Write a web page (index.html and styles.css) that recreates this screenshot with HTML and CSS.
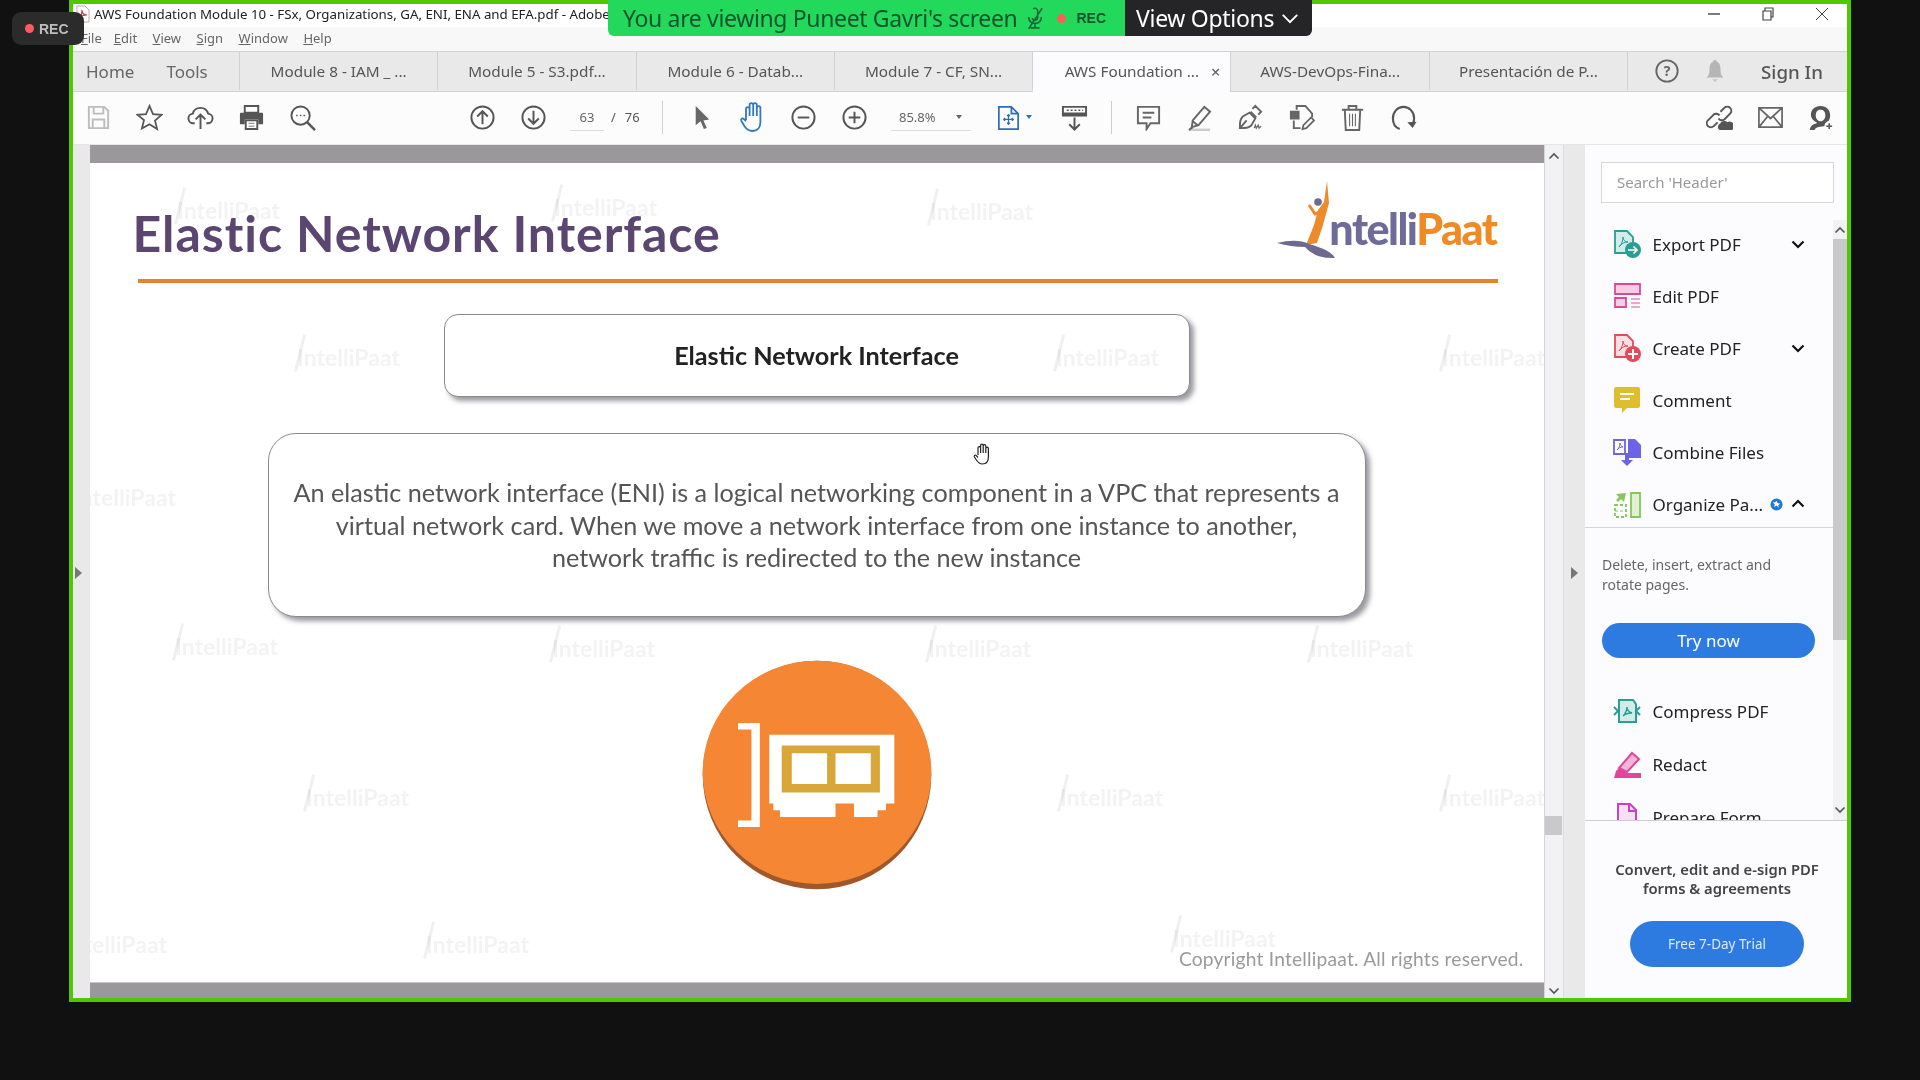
FILE: index.html
```html
<!DOCTYPE html>
<html lang="en">
<head>
<meta charset="utf-8">
<title>AWS Foundation Module 10</title>
<link rel="stylesheet" href="styles.css">
</head>
<body>
<div class="screen">
  <div class="window">
    <div class="titlebar">
      <svg class="app-icon" viewBox="0 0 14 18"><path d="M1 1h8l4 4v12H1z" fill="#fff" stroke="#c9a5a8"/><path d="M3 13c2-2 3-6 3-8 0 3 2 5 5 5-3 0-6 1-8 3z" fill="none" stroke="#d2343c" stroke-width="1.2"/></svg>
      <span class="title-text">AWS Foundation Module 10 - FSx, Organizations, GA, ENI, ENA and EFA.pdf - Adobe Acrobat Reader DC</span>
      <div class="winbtns">
        <svg class="winbtn" viewBox="0 0 16 16"><path d="M2 8h12" stroke="#222" stroke-width="1.2"/></svg>
        <svg class="winbtn" viewBox="0 0 16 16"><path d="M3 5h8v9H3zM5 5V2h8v9h-2" fill="none" stroke="#444" stroke-width="1.2"/></svg>
        <svg class="winbtn" viewBox="0 0 16 16"><path d="M2 2l12 12M14 2L2 14" stroke="#444" stroke-width="1"/></svg>
      </div>
    </div>
    <div class="menubar">
      <span class="menu-file"><u>F</u>ile</span><span><u>E</u>dit</span><span><u>V</u>iew</span><span><u>S</u>ign</span><span><u>W</u>indow</span><span><u>H</u>elp</span>
    </div>
    <div class="tabbar">
      <div class="nav-tabs"><span>Home</span><span>Tools</span></div>
      <div class="tab">Module 8 - IAM _ ...</div>
      <div class="tab">Module 5 - S3.pdf...</div>
      <div class="tab">Module 6 - Datab...</div>
      <div class="tab">Module 7 - CF, SN...</div>
      <div class="tab tab-active"><span>AWS Foundation ...</span><b class="tab-x">×</b></div>
      <div class="tab">AWS-DevOps-Fina...</div>
      <div class="tab">Presentación de P...</div>
      <div class="tab-right">
        <svg class="help" viewBox="0 0 28 28"><circle cx="14" cy="14" r="11.5" fill="none" stroke="#666" stroke-width="2"/><text x="14" y="19.5" text-anchor="middle" class="help-q">?</text></svg>
        <svg class="bell" viewBox="0 0 24 28"><path d="M12 2c1.500 0 2 1 2 2 3 1 4 4 4 8 0 5 1 7 3 9H3c2-2 3-4 3-9 0-4 1-7 4-8 0-1 .5-2 2-2z" fill="#b5b5b5"/><path d="M9 23h6l-3 3z" fill="#c5c5c5"/></svg>
        <span class="signin">Sign In</span>
      </div>
    </div>
    <div class="toolbar">
      <div class="cell"><svg class="ti" viewBox="0 0 28 28" fill="none" stroke="#bdbdbd" stroke-width="2"><path d="M4 3h16l4 4v18H4zM9 3v7h10V3M8 25v-9h12v9"/></svg></div>
      <div class="cell"><svg class="ti" viewBox="0 0 28 28" fill="none" stroke="#555" stroke-width="1.800"><path d="M14 2l3.600 8.500 9 .7-6.900 5.900 2.200 8.900L14 21l-7.900 4.500 2.200-8.900L1.400 11.200l9-.7z"/></svg></div>
      <div class="cell"><svg class="ti" viewBox="0 0 28 28" fill="none" stroke="#555" stroke-width="2"><path d="M8 20H7a5 5 0 0 1-1-10c1-4 4-6 8-6s7 3 8 6a5 5 0 0 1-1 10h-1M14 26V12M9 16l5-5 5 5"/></svg></div>
      <div class="cell"><svg class="ti" viewBox="0 0 28 28"><path d="M7 2h14v7H7z" fill="none" stroke="#555" stroke-width="2"/><path d="M3 9h22a1 1 0 0 1 1 1v11h-5v-5H7v5H2V10a1 1 0 0 1 1-1z" fill="#555"/><path d="M8 17h12v9H8z" fill="none" stroke="#555" stroke-width="2"/><path d="M11 20h6M11 23h6" stroke="#777"/></svg></div>
      <div class="cell"><svg class="ti" viewBox="0 0 28 28" fill="none" stroke="#555" stroke-width="2"><circle cx="12" cy="12" r="9.500"/><path d="M19 19l8 8" stroke-width="2.500"/><path d="M7.500 12h1.500M11.300 12h1.500M15 12h1.500" stroke-width="1.600"/></svg></div>

      <div class="cell gap-nav"><svg class="ti" viewBox="0 0 28 28" fill="none" stroke="#555" stroke-width="2"><circle cx="14" cy="14" r="11.500"/><path d="M14 21V8M8.500 13L14 7.500l5.500 5.500"/></svg></div>
      <div class="cell"><svg class="ti" viewBox="0 0 28 28" fill="none" stroke="#555" stroke-width="2"><circle cx="14" cy="14" r="11.500"/><path d="M14 7v13M8.500 15l5.500 5.500 5.500-5.500"/></svg></div>
      <div class="pagefield"><span class="pagenum">63</span><span class="pageslash">/</span><span class="pagetotal">76</span></div>
      <i class="tsep"></i>
      <div class="cell"><svg class="ti" viewBox="0 0 28 28"><path d="M8 2l14 14-6 1 3.500 8-3 1-3.500-8-5 4z" fill="#666"/></svg></div>
      <div class="cell"><svg class="ti ti-lg" viewBox="0 0 28 32" fill="none" stroke="#2d7ac0" stroke-width="1.800"><path d="M7 19V8a1.800 1.800 0 0 1 3.600 0v7M10.600 15V4a1.800 1.800 0 0 1 3.600 0v11M14.200 15V4a1.800 1.800 0 0 1 3.600 0v11M17.800 15V7a1.800 1.800 0 0 1 3.600 0v14c0 6-3 9-8 9-4 0-6-2-8-5l-3-5c-1-2 1-3.500 2.500-2L7 20"/></svg></div>
      <div class="cell"><svg class="ti" viewBox="0 0 28 28" fill="none" stroke="#555" stroke-width="2"><circle cx="14" cy="14" r="11.500"/><path d="M8 14h12"/></svg></div>
      <div class="cell"><svg class="ti" viewBox="0 0 28 28" fill="none" stroke="#555" stroke-width="2"><circle cx="14" cy="14" r="11.500"/><path d="M8 14h12M14 8v12"/></svg></div>
      <div class="zoomfield"><span>85.8%</span><i class="caret"></i></div>
      <div class="fit"><svg class="ti" viewBox="0 0 28 28" fill="none" stroke="#2d6fb5" stroke-width="1.800"><path d="M4 3h13l7 7v16H4zM17 3v7h7"/><path d="M14 11v10M9 16h10M12.500 12.500L14 11l1.500 1.500M12.500 19.500L14 21l1.500-1.500M10.500 14.500L9 16l1.500 1.500M17.500 14.500L19 16l-1.500 1.500" stroke-width="1.300"/></svg><i class="caret caret-blue"></i></div>
      <div class="cell cell-scan"><svg class="ti" viewBox="0 0 28 28" fill="none" stroke="#555" stroke-width="2"><path d="M2 3h24v7H2z"/><path d="M2 10h24v2H2z" fill="#777"/><path d="M6 6.500h2M10 6.500h2M14 6.500h2M18 6.500h2M22 6.500h1" stroke-width="1.400"/><path d="M14 14v12M8.500 21l5.500 5.500 5.500-5.500"/></svg></div>
      <i class="tsep tsep-2"></i>
      <div class="cell"><svg class="ti" viewBox="0 0 28 28" fill="none" stroke="#666" stroke-width="2"><path d="M3 3h22v17h-9l-4 6v-6H3z"/><path d="M8 9h12M8 14h9"/></svg></div>
      <div class="cell"><svg class="ti" viewBox="0 0 28 28"><path d="M7 17L19 3l6 5-12 14-7 2z" fill="none" stroke="#666" stroke-width="2"/><path d="M7 18l5 4" stroke="#666" stroke-width="2"/><path d="M3 27h22" stroke="#ccc" stroke-width="3"/><path d="M3 27l4-3" stroke="#666" stroke-width="2"/></svg></div>
      <div class="cell"><svg class="ti" viewBox="0 0 28 28" fill="none" stroke="#666" stroke-width="2"><path d="M3 25c0-6 0-9 3-12l7-4 6 6-4 7c-3 3-6 3-12 3zM3 25l7-8M16 5l3-3 6 6-3 3M14 8l6 6"/><path d="M18 25l1-3 1 3 2-3 1 3 2-2" stroke-width="1.300"/></svg></div>
      <div class="cell"><svg class="ti" viewBox="0 0 28 28" fill="none" stroke="#666" stroke-width="2"><path d="M9 6V2h9l7 8v4M6 17v8h7"/><path d="M3 8h8v7H3z" fill="#666"/><path d="M15 26l1-4 8-8 3 3-8 8z" stroke-width="1.800"/></svg></div>
      <div class="cell"><svg class="ti" viewBox="0 0 28 28" fill="none" stroke="#666" stroke-width="2"><path d="M3 6h22M10 6V2h8v4M6 6l1 21h14l1-21"/><path d="M11 10v13M14 10v13M17 10v13" stroke-width="1.100"/></svg></div>
      <div class="cell"><svg class="ti" viewBox="0 0 28 28" fill="none" stroke="#555" stroke-width="2.200"><path d="M10 26C5 24 3 20 3 15 3 8 8 3 14 3s11 5 11 12c0 2-.5 4-1.500 6"/><path d="M18 19l5.500 6 4-6.500z" fill="#555" stroke="none"/></svg></div>
      <div class="toolbar-right">
        <div class="cell"><svg class="ti" viewBox="0 0 28 28" fill="none" stroke="#555" stroke-width="2"><path d="M12 19l-4 4a4 4 0 0 1-6-6l6-6a4 4 0 0 1 6 1M15 8l4-4a4 4 0 0 1 6 6l-6 6a4 4 0 0 1-6-1"/><path d="M14 27a4 4 0 0 1 1-7c1-3 6-3 7-1a4 4 0 0 1 5 8z" fill="#555" stroke="none"/></svg></div>
        <div class="cell"><svg class="ti" viewBox="0 0 28 28" fill="none" stroke="#666" stroke-width="2"><path d="M2 4h24v20H2zM2 4l12 11L26 4M2 24l9-11M26 24l-9-11" stroke-width="1.800"/></svg></div>
        <div class="cell"><svg class="ti" viewBox="0 0 28 28"><path d="M13 2c6 0 10 4 10 10 0 4-2 7-5 8v3c-4 0-11 1-11 4H2c0-4 3-6 7-7v-1c-3-1-6-4-6-8C3 6 7 2 13 2z" fill="#555"/><path d="M13 6c-3 0-5 2-5 6s3 6 5 6 5-2 5-6-2-6-5-6z" fill="#fcfcfd"/><circle cx="22" cy="23" r="5" fill="#fcfcfd"/><path d="M19 23h6M22 20v6" stroke="#555" stroke-width="1.600"/></svg></div>
      </div>
    </div>
    <div class="main">
      <div class="lstrip"><i class="tri"></i></div>
      <div class="doc">
        <div class="doc-bar doc-bar-top"></div>
        <div class="slide">
          <div class="slide-head">
            <h1 class="slide-title">Elastic Network Interface</h1>
            <div class="logo">
              <svg class="logo-fig" viewBox="0 0 60 80">
                <path d="M50 0l2 22-6 22-6 18-11 2 8-20 4-15 6-8z" fill="#ee8a2a"/>
                <circle cx="41" cy="21" r="3.800" fill="#6d6a90"/>
                <path d="M32 24l6 9 5-2" fill="none" stroke="#ee8a2a" stroke-width="3"/>
                <path d="M0 62q20-5 32 1 22 6 26 14-20 1-30-11-14 0-28-4z" fill="#6d6a90"/>
              </svg>
              <span class="logo-text">ntelli<em>Paat</em></span>
            </div>
          </div>
          <div class="slide-rule"></div>
          <div class="box box-small">Elastic Network Interface</div>
          <div class="box box-large">An elastic network interface (ENI) is a logical networking component in a VPC that represents a<br>virtual network card. When we move a network interface from one instance to another,<br>network traffic is redirected to the new instance</div>
          <svg class="eni" viewBox="65 60 690 690">
            <circle cx="410" cy="405" r="340" fill="#a1572c"/>
            <ellipse cx="410" cy="397" rx="340" ry="332" fill="#f58634"/>
            <path d="M175 250h65v310h-65v-20h40V270h-40z" fill="#fff"/>
            <path d="M268 285h372v205h-25v20h-25v20h-70v-40h-55v40H300v-20h-20v-20h-12z" fill="#fff"/>
            <path d="M305 317h292v140H305z" fill="#d9a63a"/>
            <path d="M335 340h105v92H335zM465 340h105v92H465z" fill="#fff"/>
          </svg>
          <div class="copyright">Copyright Intellipaat. All rights reserved.</div>
          <div class="wms">
            <span class="wm">IntelliPaat</span><span class="wm">IntelliPaat</span><span class="wm">IntelliPaat</span>
            <span class="wm">IntelliPaat</span><span class="wm">IntelliPaat</span><span class="wm">IntelliPaat</span>
            <span class="wm">IntelliPaat</span><span class="wm">IntelliPaat</span><span class="wm">IntelliPaat</span>
            <span class="wm">IntelliPaat</span><span class="wm">IntelliPaat</span><span class="wm">IntelliPaat</span>
            <span class="wm">IntelliPaat</span><span class="wm">IntelliPaat</span><span class="wm">IntelliPaat</span>
            <span class="wm">IntelliPaat</span><span class="wm">IntelliPaat</span>
          </div>
        </div>
        <div class="doc-bar doc-bar-bottom"></div>
      </div>
      <div class="vscroll">
        <svg class="sb-arrow" viewBox="0 0 12 8"><path d="M1.500 6.500L6 2l4.500 4.500" fill="none" stroke="#555" stroke-width="1.600"/></svg>
        <i class="vthumb"></i>
        <svg class="sb-arrow" viewBox="0 0 12 8"><path d="M1.500 1.500L6 6l4.500-4.500" fill="none" stroke="#555" stroke-width="1.600"/></svg>
      </div>
      <div class="splitter"><i class="tri"></i></div>
      <aside class="sidebar">
        <div class="search-wrap"><div class="search">Search 'Header'</div></div>
        <div class="tools">
          <div class="tool-list">
            <div class="tool"><svg class="si" viewBox="0 0 28 28"><path d="M2 1h12l6 6v16H2z" fill="#d3ebe9" stroke="#2a9d94" stroke-width="1.800"/><path d="M6 17c3-3 4-7 4-10 0 3 2 5 5 5-4 0-7 2-9 5z" fill="none" stroke="#2a9d94"/><circle cx="20" cy="20" r="8" fill="#2a9d94"/><path d="M15 20h9M20.500 16.500l3.500 3.500-3.500 3.500" stroke="#fff" stroke-width="1.700" fill="none"/></svg><span class="tname">Export PDF</span><svg class="chev" viewBox="0 0 14 9"><path d="M1.500 1.500L7 7l5.500-5.500" fill="none" stroke="#111" stroke-width="2.200"/></svg></div>
            <div class="tool"><svg class="si" viewBox="0 0 28 28"><path d="M2 2h25v10H2z" fill="#f5cfe3" stroke="#d9489a" stroke-width="1.800"/><path d="M2 16h11v9H2z" fill="#f5cfe3" stroke="#d9489a" stroke-width="1.800"/><path d="M18 17h9M18 21h9M18 25h9" stroke="#e58bbc" stroke-width="1.300"/></svg><span class="tname">Edit PDF</span></div>
            <div class="tool"><svg class="si" viewBox="0 0 28 28"><path d="M2 1h12l6 6v16H2z" fill="#fbe1e3" stroke="#e34a5a" stroke-width="1.800"/><path d="M6 17c3-3 4-7 4-10 0 3 2 5 5 5-4 0-7 2-9 5z" fill="none" stroke="#e34a5a"/><circle cx="20" cy="20" r="8" fill="#e34a5a"/><path d="M15 20h10M20 15v10" stroke="#fff" stroke-width="2"/></svg><span class="tname">Create PDF</span><svg class="chev" viewBox="0 0 14 9"><path d="M1.500 1.500L7 7l5.500-5.500" fill="none" stroke="#111" stroke-width="2.200"/></svg></div>
            <div class="tool"><svg class="si" viewBox="0 0 28 28"><path d="M3 1h22a2 2 0 0 1 2 2v17a2 2 0 0 1-2 2H14l-5 5v-5H3a2 2 0 0 1-2-2V3a2 2 0 0 1 2-2z" fill="#e0bd2c"/><path d="M7 8h14M7 13h10" stroke="#fff" stroke-width="2"/></svg><span class="tname">Comment</span></div>
            <div class="tool"><svg class="si" viewBox="0 0 28 28"><path d="M1 2h11v14H1z" fill="#fff" stroke="#6c64e6" stroke-width="1.800"/><path d="M4 12c2-2 3-4 3-7 0 2 1 3 3 4-3 0-4 1-6 3z" fill="none" stroke="#6c64e6"/><path d="M15 1h7l6 6v13H15z" fill="#6c64e6"/><path d="M12 15h4v7h4l-6 6-6-6h4z" fill="#6c64e6"/></svg><span class="tname">Combine Files</span></div>
            <div class="tool tool-organize"><svg class="si" viewBox="0 0 28 28"><path d="M18 2h9v24h-9z" fill="#dff0d3" stroke="#86c75a" stroke-width="1.800"/><path d="M2 14h11v12H2z" fill="none" stroke="#86c75a" stroke-width="1.800" stroke-dasharray="3 2"/><path d="M2 20h11" stroke="#86c75a" stroke-dasharray="3 2"/><path d="M13 2L3 3l3 3-3 3 2 2 3-3 3 3z" fill="#86c75a"/></svg><span class="tname tname-short">Organize Pa...</span><svg class="star-badge" viewBox="0 0 14 14"><circle cx="7" cy="7" r="6.500" fill="#1f78e0"/><path d="M7 3l1.200 2.700 2.800.2-2.100 1.900.7 2.800L7 8.100 4.400 9.600l.7-2.800L3 4.900l2.800-.2z" fill="#fff"/></svg><svg class="chev" viewBox="0 0 14 9"><path d="M1.500 7.500L7 2l5.500 5.500" fill="none" stroke="#111" stroke-width="2.200"/></svg></div>
            <div class="tool-detail">
              <p class="tool-desc">Delete, insert, extract and<br>rotate pages.</p>
              <div class="btn btn-try">Try now</div>
            </div>
            <div class="tool tool-tall"><svg class="si" viewBox="0 0 28 28"><path d="M6 2h14l3 4v18H6z" fill="#d3ebe9" stroke="#2a9d94" stroke-width="2"/><path d="M10 18c2-2 4-5 4-9 0 3 2 5 5 6-4 0-7 1-9 3z" fill="none" stroke="#2a9d94" stroke-width="1.400"/><path d="M1 9l4 4-4 4M27 9l-4 4 4 4" fill="none" stroke="#2a9d94" stroke-width="2"/></svg><span class="tname">Compress PDF</span></div>
            <div class="tool tool-tall"><svg class="si" viewBox="0 0 28 28"><path d="M6 17L19 2l7 6-12 13z" fill="#f4b6d8" stroke="#e0479c" stroke-width="2"/><path d="M1 27l2-7 4-4 7 6-2 5zM12 22h16v5H10z" fill="#e0479c"/></svg><span class="tname">Redact</span></div>
            <div class="tool"><svg class="si" viewBox="0 0 28 28"><path d="M5 1h12l6 6v20H5z" fill="#f7dff5" stroke="#c943c5" stroke-width="2"/><path d="M16 1v7h7M5 21h18" fill="none" stroke="#c943c5" stroke-width="2"/></svg><span class="tname">Prepare Form</span></div>
          </div>
          <div class="side-scroll">
            <svg class="sb-arrow" viewBox="0 0 12 8"><path d="M1.500 6.500L6 2l4.500 4.500" fill="none" stroke="#555" stroke-width="1.600"/></svg>
            <i class="side-thumb"></i>
            <svg class="sb-arrow" viewBox="0 0 12 8"><path d="M1.500 1.500L6 6l4.500-4.500" fill="none" stroke="#555" stroke-width="1.600"/></svg>
          </div>
        </div>
        <div class="promo">
          <p class="promo-text">Convert, edit and e-sign PDF<br>forms &amp; agreements</p>
          <div class="btn btn-trial">Free 7-Day Trial</div>
        </div>
      </aside>
    </div>
  </div>

  <div class="rec-badge"><i class="rec-dot"></i>REC</div>
  <div class="banner">
    <div class="banner-green">
      <span>You are viewing Puneet Gavri's screen</span>
      <svg class="mic" viewBox="0 0 20 26" fill="none" stroke="#176a36" stroke-width="1.800"><path d="M8 3a3 3 0 0 1 5 2v7a3 3 0 0 1-6 1M3 12c0 5 3 7 7 7s7-2 7-7M10 19v5M5 24h10M18 2L3 25"/></svg>
      <i class="banner-dot"></i>
      <b class="banner-rec">REC</b>
    </div>
    <div class="banner-dark"><span>View Options</span><svg class="banner-chev" viewBox="0 0 20 12"><path d="M2 2l8 8 8-8" fill="none" stroke="#fff" stroke-width="2.200"/></svg></div>
  </div>
  <svg class="grab" viewBox="0 0 22 24"><path d="M6 13V6a1.300 1.300 0 0 1 2.600 0v5M8.600 11V3.500a1.300 1.300 0 0 1 2.600 0V11M11.200 11V4a1.300 1.300 0 0 1 2.600 0v7M13.800 11V6.500a1.300 1.300 0 0 1 2.600 0V15c0 4-2 7-6 7-3 0-4-1-6-4l-2-3c-.8-1.400.8-2.400 2-1.400L6 15.500" fill="#fff" stroke="#222" stroke-width="1.200"/></svg>
</div>
</body>
</html>
```
FILE: styles.css
```css
* { box-sizing: border-box; }
html, body { margin: 0; padding: 0; height: 100%; background: #111; overflow: hidden; }
body { font-family: "Noto Sans", "Open Sans", sans-serif; }
.screen { position: relative; width: 1920px; height: 1080px; background: #111; filter: blur(0.35px); }

.window {
  margin-left: 69px; width: 1782px; height: 1002px;
  border: 4px solid #4fc800; background: #fcfcfe;
  display: flex; flex-direction: column; overflow: hidden;
}

.titlebar { height: 23px; padding-bottom: 3px; background: #fff; display: flex; align-items: center; position: relative; flex: none; }
.app-icon { width: 14px; height: 18px; margin-left: 3px; flex: none; }
.title-text { margin-left: 4px; font-size: 13.300px; color: #222; white-space: nowrap; width: 600px; overflow: hidden; }
.winbtns { margin-left: auto; display: flex; margin-right: 17px; }
.winbtn { width: 16px; height: 16px; margin-left: 38px; }
.winbtns .winbtn:first-child { margin-left: 0; }

.menubar { height: 24px; padding-bottom: 2px; background: #f8f8f8; display: flex; align-items: center; font-size: 13px; color: #666; flex: none; }
.menubar span { margin-right: 15.500px; white-space: nowrap; }
.menubar .menu-file { margin-left: 8px; margin-right: 12px; }

.tabbar { height: 41px; padding-bottom: 1px; background: #e9e9e9; border-top: 1px solid #d2d2d2; border-bottom: 1px solid #d2d2d2; display: flex; align-items: stretch; flex: none; font-size: 15.300px; color: #555; }
.nav-tabs { width: 167px; display: flex; align-items: center; padding-left: 13px; gap: 32px; font-size: 17px; color: #666; border-right: 1px solid #d2d2d2; }
.tab { width: 198.300px; display: flex; align-items: center; justify-content: center; border-right: 1px solid #d2d2d2; position: relative; white-space: nowrap; }
.tab-active { background: #fcfcfe; margin-bottom: -2px; padding-bottom: 3px; }
.tab-x { position: absolute; right: 10px; top: 8px; font-size: 17px; font-weight: 500; color: #666; }
.tab-right { flex: 1; display: flex; align-items: center; padding-left: 26px; }
.help { width: 26px; height: 26px; }
.help-q { font: 700 15px "Noto Sans", sans-serif; fill: #666; }
.bell { width: 22px; height: 26px; margin-left: 24px; }
.signin { margin-left: 35px; font-size: 18.700px; font-weight: 500; color: #555; }

.toolbar { height: 53px; padding-bottom: 2px; background: #fcfcfd; display: flex; align-items: center; flex: none; border-bottom: 1px solid #e6e6e6; font-size: 13px; color: #555; }
.cell { width: 51px; display: flex; justify-content: center; flex: none; }
.ti { width: 27px; height: 27px; display: block; }
.ti-lg { width: 28px; height: 32px; }
.gap-nav { margin-left: 129px; }
.pagefield { margin-left: 11px; display: flex; align-items: center; width: 88px; flex: none; }
.pagenum { width: 34px; height: 27px; line-height: 26px; text-align: center; border-bottom: 1px solid #ddd; color: #666; }
.pageslash { margin-left: 7px; }
.pagetotal { margin-left: 9px; }
.tsep { width: 1px; height: 33px; background: #cfcfcf; flex: none; margin-left: 4px; margin-right: 13px; }
.zoomfield { margin-left: 11px; width: 80px; height: 27px; border-bottom: 1px solid #ddd; display: flex; align-items: center; padding-left: 8px; flex: none; color: #666; }
.caret { width: 0; height: 0; border-left: 3.500px solid transparent; border-right: 3.500px solid transparent; border-top: 4.500px solid #666; margin-left: 20px; }
.caret-blue { border-top-color: #2d6fb5; margin-left: 4px; }
.fit { margin-left: 24px; display: flex; align-items: center; flex: none; width: 54px; }
.tsep-2 { margin-left: 11px; margin-right: 11px; }
.toolbar-right { margin-left: auto; display: flex; }

.main { flex: 1; display: flex; min-height: 0; }
.lstrip { width: 16.500px; background: #e9e9e9; display: flex; align-items: center; padding-left: 2px; padding-top: 2px; flex: none; }
.tri { width: 0; height: 0; border-top: 6px solid transparent; border-bottom: 6px solid transparent; border-left: 7px solid #777; display: block; }
.doc { width: 1454px; display: flex; flex-direction: column; flex: none; }
.doc-bar { background: #9a989b; flex: none; }
.doc-bar-top { height: 18px; }
.doc-bar-bottom { flex: 1; border-top: 1px solid #c8c8c8; }

.slide { height: 819px; background: #fff; position: relative; overflow: hidden; flex: none; font-family: Lato, "Liberation Sans", sans-serif; display: flex; flex-direction: column; }
.slide-head { height: 116px; padding-left: 43px; padding-right: 47px; display: flex; justify-content: space-between; align-items: flex-start; flex: none; }
.slide-title { margin: 38px 0 0; font-size: 50px; line-height: 64px; font-weight: 700; letter-spacing: .95px; color: #5b4672; white-space: nowrap; }
.logo { display: flex; align-items: flex-end; margin-top: 18px; }
.logo-fig { width: 60px; height: 80px; margin-right: -8px; }
.logo-text { font-size: 43px; font-weight: 900; color: #6f6b98; letter-spacing: -1.500px; line-height: 64px; white-space: nowrap; }
.logo-text em { font-style: normal; color: #f08a24; }
.slide-rule { height: 4px; background: #e0852c; margin: 0 46px 0 48.500px; flex: none; }
.box { background: #fff; border: 1.500px solid #8a8a8e; box-shadow: 4px 4px 5px rgba(70,70,80,.55); align-self: center; display: flex; align-items: center; justify-content: center; text-align: center; flex: none; }
.box-small { width: 746px; height: 83px; margin-top: 31px; padding-bottom: 2px; border-radius: 14px; font-size: 25.200px; font-weight: 700; color: #222; }
.box-large { width: 1098px; height: 184px; margin-top: 36px; border-radius: 28px; font-size: 25.200px; line-height: 32.500px; color: #555; }
.eni { width: 232px; height: 232px; align-self: center; flex: none; margin-top: 42px; }
.copyright { align-self: flex-end; margin: 56px 20px 0 0; font-size: 19.200px; color: #9a9a9a; letter-spacing: .2px; white-space: nowrap; flex: none; }

.wms { position: absolute; inset: 0; pointer-events: none; }
.wm { position: absolute; transform: translate(-50%, -50%); font-size: 23px; font-weight: 700; color: rgba(90,90,110,.075); white-space: nowrap; filter: blur(.7px); }
.wm::before { content: ""; position: absolute; left: 1px; top: -9px; width: 3px; height: 38px; background: rgba(90,90,110,.09); transform: rotate(14deg); }
.wm:nth-child(1) { left: 139px; top: 47px; }
.wm:nth-child(2) { left: 516px; top: 44px; }
.wm:nth-child(3) { left: 892px; top: 48px; }
.wm:nth-child(4) { left: 259px; top: 194px; }
.wm:nth-child(5) { left: 1018px; top: 194px; }
.wm:nth-child(6) { left: 1404px; top: 194px; }
.wm:nth-child(7) { left: 35px; top: 334px; }
.wm:nth-child(8) { left: 137px; top: 483px; }
.wm:nth-child(9) { left: 514px; top: 485px; }
.wm:nth-child(10) { left: 890px; top: 485px; }
.wm:nth-child(11) { left: 1272px; top: 485px; }
.wm:nth-child(12) { left: 268px; top: 634px; }
.wm:nth-child(13) { left: 1022px; top: 634px; }
.wm:nth-child(14) { left: 1404px; top: 634px; }
.wm:nth-child(15) { left: 26px; top: 781px; }
.wm:nth-child(16) { left: 388px; top: 781px; }
.wm:nth-child(17) { left: 1135px; top: 775px; }

.vscroll { width: 19.500px; background: #f2f1f4; border-left: 1px solid #d5d5d5; flex: none; display: flex; flex-direction: column; align-items: center; padding-top: 7px; }
.sb-arrow { width: 12px; height: 8px; flex: none; }
.vthumb { width: 17px; height: 19px; background: #c9c8ca; margin-top: 656px; margin-bottom: auto; }
.vscroll .sb-arrow:last-child { margin-bottom: 3px; }
.splitter { width: 22px; background: #e9e9e9; flex: none; border-left: 1px solid #dcdcdc; display: flex; align-items: center; justify-content: center; padding-top: 2px; }

.sidebar { width: 262px; background: #fcfcfe; display: flex; flex-direction: column; flex: none; }
.search-wrap { height: 73px; padding: 17px 13px 0 16px; flex: none; }
.search { height: 41px; background: #fff; border: 1.500px solid #d8d8dc; font-size: 15px; line-height: 39px; padding-left: 15px; color: #999; }
.tools { height: 602px; display: flex; overflow: hidden; flex: none; }
.tool-list { width: 248px; flex: none; overflow: hidden; }
.tool { height: 52px; display: flex; align-items: center; padding-left: 28px; color: #222; font-size: 17px; white-space: nowrap; position: relative; }
.tool-tall { height: 53px; }
.si { width: 28px; height: 28px; flex: none; margin-right: 11.500px; }
.chev { width: 14px; height: 9px; position: absolute; left: 206px; top: 22px; }
.tool-organize { height: 50px; padding-top: 4px; border-bottom: 1px solid #d5d5d8; }
.tool-organize .chev { top: 21px; }
.star-badge { width: 13px; height: 13px; position: absolute; left: 185px; top: 20px; }
.tool-detail { height: 157px; padding: 27px 0 0 17px; }
.tool-desc { margin: 0; font-size: 14px; line-height: 19.500px; color: #666; }
.btn { background: #2d7be0; color: #fff; border-radius: 23px; display: flex; align-items: center; justify-content: center; }
.btn-try { width: 213px; height: 35px; margin-top: 29px; font-size: 17px; }
.side-scroll { width: 14px; background: #f2f1f4; flex: none; display: flex; flex-direction: column; align-items: center; margin-top: 2px; padding-top: 6px; }
.side-thumb { width: 14px; height: 401px; background: #c9c8ca; margin-top: 5px; margin-bottom: auto; }
.side-scroll .sb-arrow:last-child { margin-bottom: 6px; }
.promo { flex: 1; border-top: 1px solid #cfcfd2; display: flex; flex-direction: column; align-items: center; padding: 39px 0 0 2px; }
.promo-text { margin: 0; font-size: 14.800px; line-height: 19px; font-weight: 600; color: #444; text-align: center; }
.btn-trial { width: 174px; height: 46px; margin-top: 23px; font-size: 13.500px; color: #dbeaff; }

.rec-badge { position: absolute; left: 12px; top: 12px; width: 72px; height: 33px; background: #2b2b2b; border-radius: 9px; display: flex; align-items: center; padding-left: 13px; font: 700 14px "Liberation Sans", sans-serif; color: #bdbdbd; }
.rec-dot { width: 9px; height: 9px; border-radius: 50%; background: #ff5a5f; margin-right: 5px; }
.banner { position: absolute; left: 608px; top: 0; width: 704px; height: 36px; display: flex; border-radius: 0 0 6px 6px; overflow: hidden; }
.banner-green { width: 517px; background: #22d95c; display: flex; align-items: center; padding-left: 15px; font-size: 23px; letter-spacing: -.35px; color: #14532d; white-space: nowrap; }
.mic { width: 18px; height: 24px; margin-left: 9px; flex: none; }
.banner-dot { width: 9px; height: 9px; background: #ff5f5a; border-radius: 50%; margin-left: 13px; flex: none; }
.banner-rec { font: 700 14px "Liberation Sans", sans-serif; letter-spacing: 0; margin-left: 10px; color: #14532d; }
.banner-dark { flex: 1; background: #252528; color: #fff; display: flex; align-items: center; padding-left: 11px; font-size: 23px; letter-spacing: -.3px; white-space: nowrap; }
.banner-chev { width: 18px; height: 11px; margin-left: 7px; flex: none; }
.grab { position: absolute; left: 972px; top: 442px; width: 22px; height: 24px; }
```
